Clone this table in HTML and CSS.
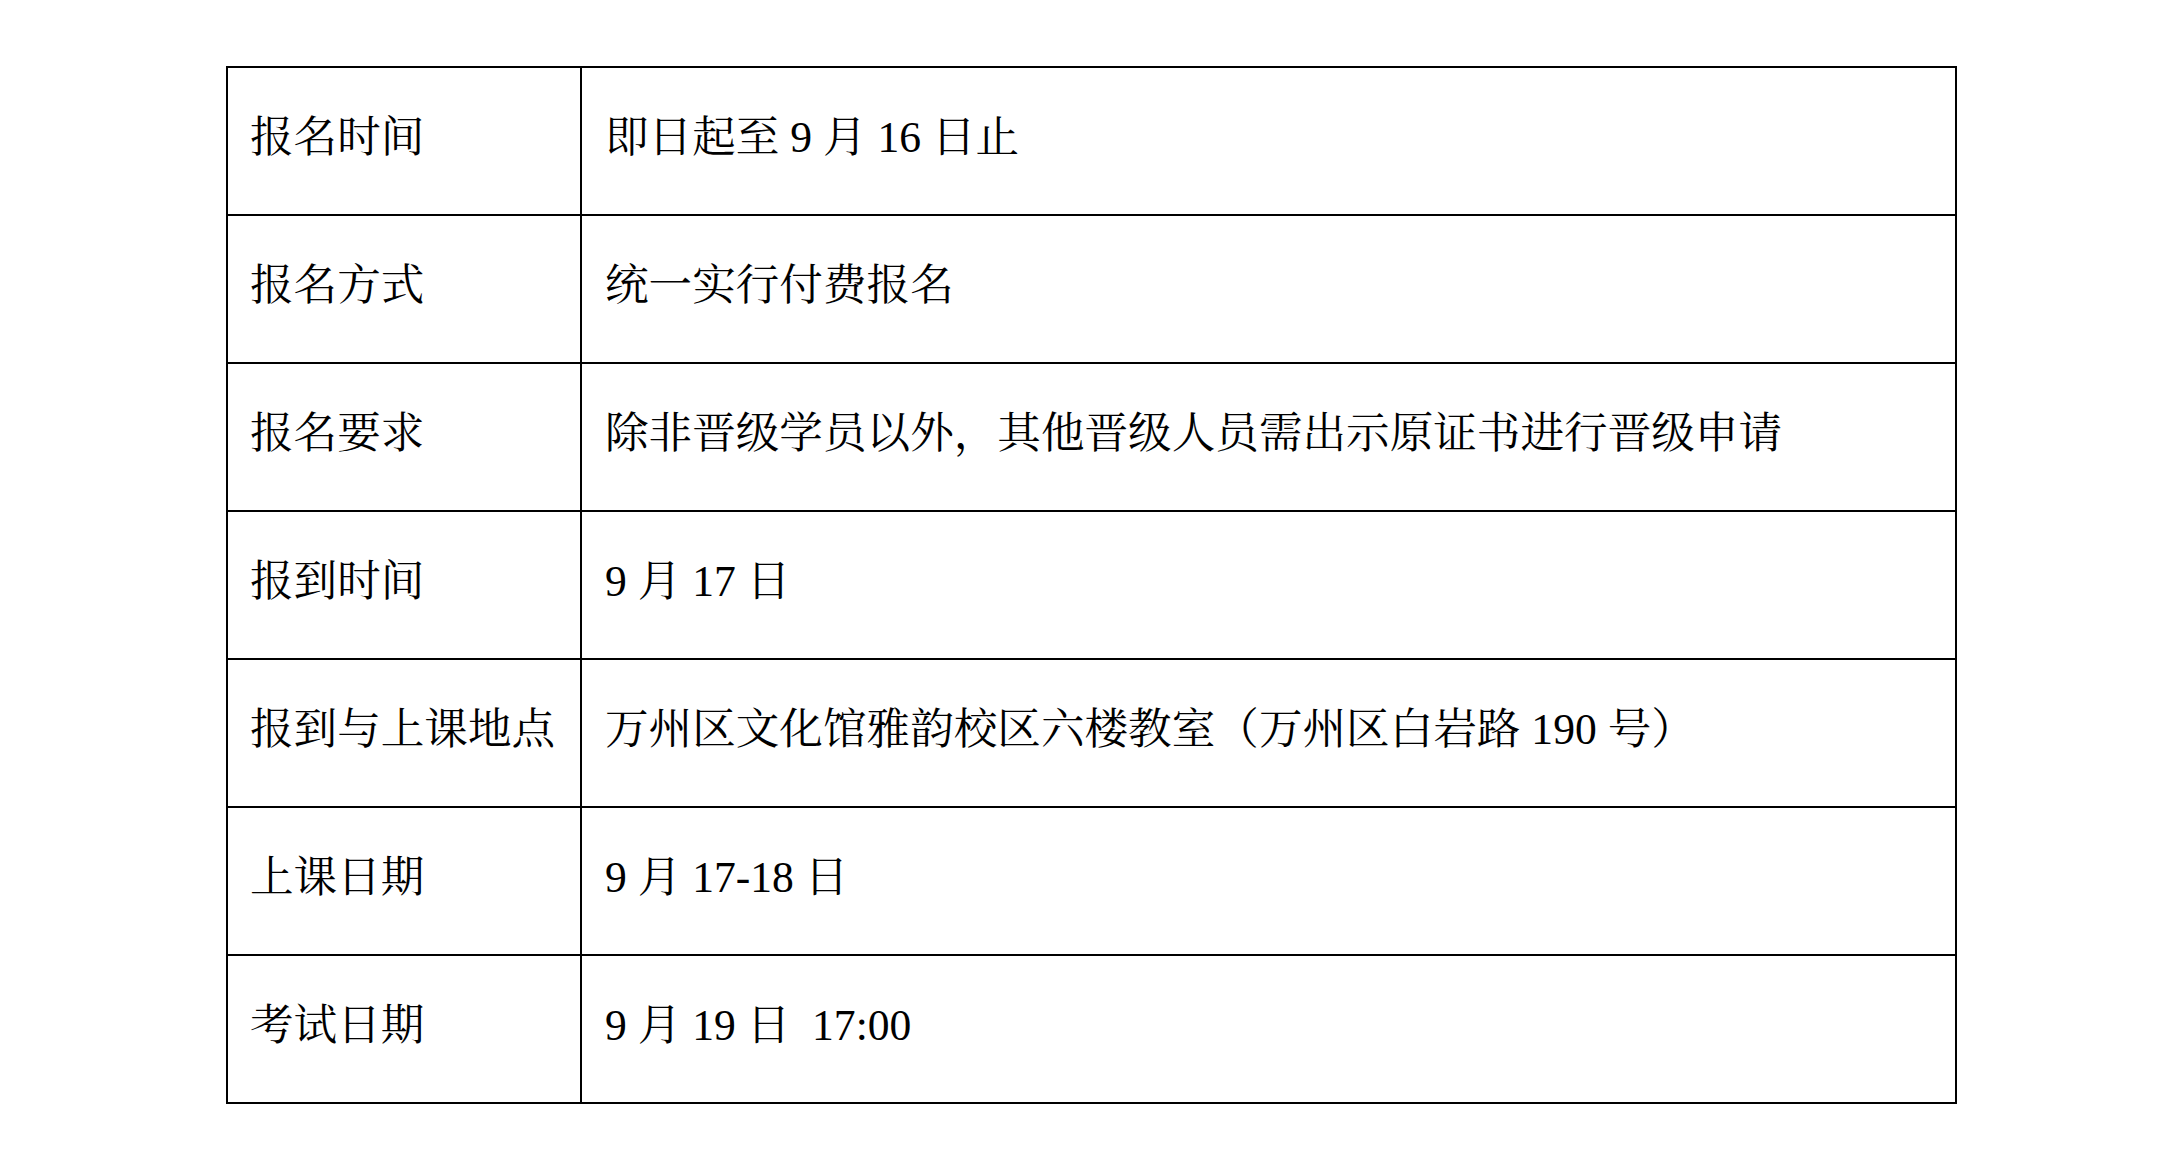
FILE: index.html
```html
<!DOCTYPE html>
<html lang="zh-CN">
<head>
<meta charset="utf-8">
<title>报名信息</title>
<link rel="stylesheet" href="styles.css">
</head>
<body>
<div class="sheet">
  <div class="grid">
    <div class="cell label">报名时间</div>
    <div class="cell value">即日起至 9 月 16 日止</div>
    <div class="cell label">报名方式</div>
    <div class="cell value">统一实行付费报名</div>
    <div class="cell label">报名要求</div>
    <div class="cell value">除非晋级学员以外，其他晋级人员需出示原证书进行晋级申请</div>
    <div class="cell label">报到时间</div>
    <div class="cell value">9 月 17 日</div>
    <div class="cell label">报到与上课地点</div>
    <div class="cell value">万州区文化馆雅韵校区六楼教室（万州区白岩路 190 号）</div>
    <div class="cell label">上课日期</div>
    <div class="cell value">9 月 17-18 日</div>
    <div class="cell label">考试日期</div>
    <div class="cell value">9 月 19 日&nbsp; 17:00</div>
  </div>
</div>
</body>
</html>
```

FILE: styles.css
```css
html, body {
  margin: 0;
  padding: 0;
  background: #ffffff;
}

body {
  font-family: "Liberation Serif", "Noto Serif CJK SC", "Noto Sans CJK SC", serif;
  color: #000000;
}

.sheet {
  padding: 66px 0 0 226px;
}

.grid {
  width: 1731px;
  box-sizing: border-box;
  display: grid;
  grid-template-columns: 354px 1fr;
  grid-auto-rows: 148px;
  border-top: 2px solid #000;
  border-left: 2px solid #000;
}

.cell {
  box-sizing: border-box;
  border-right: 2px solid #000;
  border-bottom: 2px solid #000;
  display: flex;
  align-items: center;
  padding: 0 0 8px 22px;
  font-size: 43.6px;
  line-height: 1.2;
  white-space: nowrap;
}

.value {
  padding-left: 23px;
}
```
